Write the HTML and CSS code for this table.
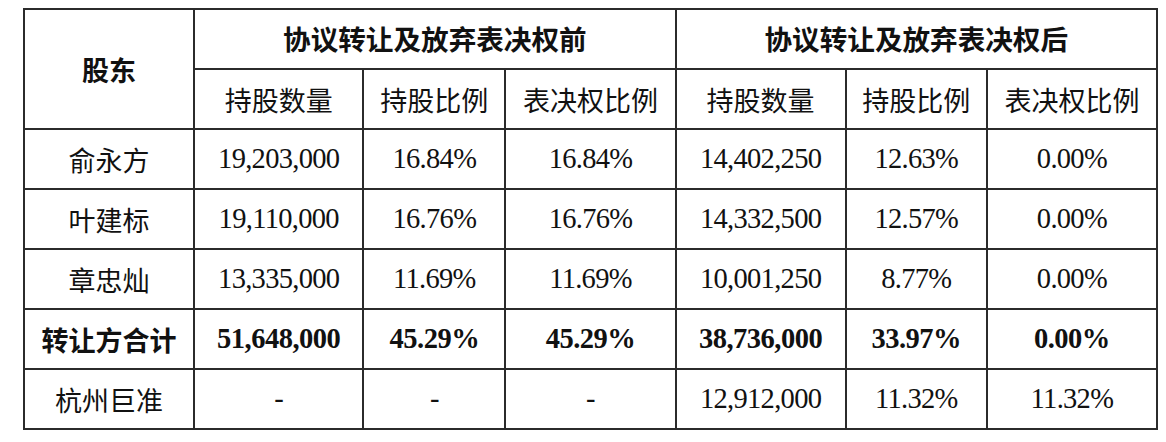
FILE: index.html
```html
<!DOCTYPE html>
<html lang="zh">
<head>
<meta charset="utf-8">
<link rel="stylesheet" href="styles.css">
</head>
<body>
<table class="sheet">
  <colgroup>
    <col class="c1"><col class="c2"><col class="c3"><col class="c4"><col class="c5"><col class="c6"><col class="c7">
  </colgroup>
  <tr class="head">
    <th rowspan="2" class="zh bold">股东</th>
    <th colspan="3" class="zh bold wide">协议转让及放弃表决权前</th>
    <th colspan="3" class="zh bold wide">协议转让及放弃表决权后</th>
  </tr>
  <tr class="head">
    <th class="zh">持股数量</th>
    <th class="zh">持股比例</th>
    <th class="zh">表决权比例</th>
    <th class="zh">持股数量</th>
    <th class="zh">持股比例</th>
    <th class="zh">表决权比例</th>
  </tr>
  <tr>
    <td class="zh">俞永方</td>
    <td class="num">19,203,000</td><td class="num">16.84%</td><td class="num">16.84%</td>
    <td class="num">14,402,250</td><td class="num">12.63%</td><td class="num">0.00%</td>
  </tr>
  <tr>
    <td class="zh">叶建标</td>
    <td class="num">19,110,000</td><td class="num">16.76%</td><td class="num">16.76%</td>
    <td class="num">14,332,500</td><td class="num">12.57%</td><td class="num">0.00%</td>
  </tr>
  <tr>
    <td class="zh">章忠灿</td>
    <td class="num">13,335,000</td><td class="num">11.69%</td><td class="num">11.69%</td>
    <td class="num">10,001,250</td><td class="num">8.77%</td><td class="num">0.00%</td>
  </tr>
  <tr class="total">
    <td class="zh bold">转让方合计</td>
    <td class="num">51,648,000</td><td class="num">45.29%</td><td class="num">45.29%</td>
    <td class="num">38,736,000</td><td class="num">33.97%</td><td class="num">0.00%</td>
  </tr>
  <tr>
    <td class="zh">杭州巨准</td>
    <td class="num">-</td><td class="num">-</td><td class="num">-</td>
    <td class="num">12,912,000</td><td class="num">11.32%</td><td class="num">11.32%</td>
  </tr>
</table>
</body>
</html>
```

FILE: styles.css
```css
html, body {
  margin: 0;
  padding: 0;
  background: #ffffff;
}
.sheet {
  margin: 8px 0 0 23px;
  border-collapse: collapse;
  table-layout: fixed;
  width: 1135px;
  color: #111111;
}
.c1 { width: 170px; }
.c2 { width: 169px; }
.c3 { width: 142px; }
.c4 { width: 170px; }
.c5 { width: 170px; }
.c6 { width: 141px; }
.c7 { width: 170px; }
.sheet tr { height: 60px; }
.sheet th, .sheet td {
  border: 2px solid #2b2b2b;
  padding: 0;
  text-align: center;
  vertical-align: middle;
  font-weight: 400;
}
.zh {
  font-family: "Noto Sans CJK SC", sans-serif;
  font-size: 27px;
  font-weight: 300;
  line-height: 1;
}
.sheet .bold {
  font-weight: 700;
}
.sheet .wide {
  font-size: 27.6px;
}
.num {
  font-family: "Liberation Serif", serif;
  font-size: 28.5px;
  letter-spacing: -0.7px;
  line-height: 1;
}
.total .num {
  font-weight: 700;
  letter-spacing: -0.5px;
}
```
